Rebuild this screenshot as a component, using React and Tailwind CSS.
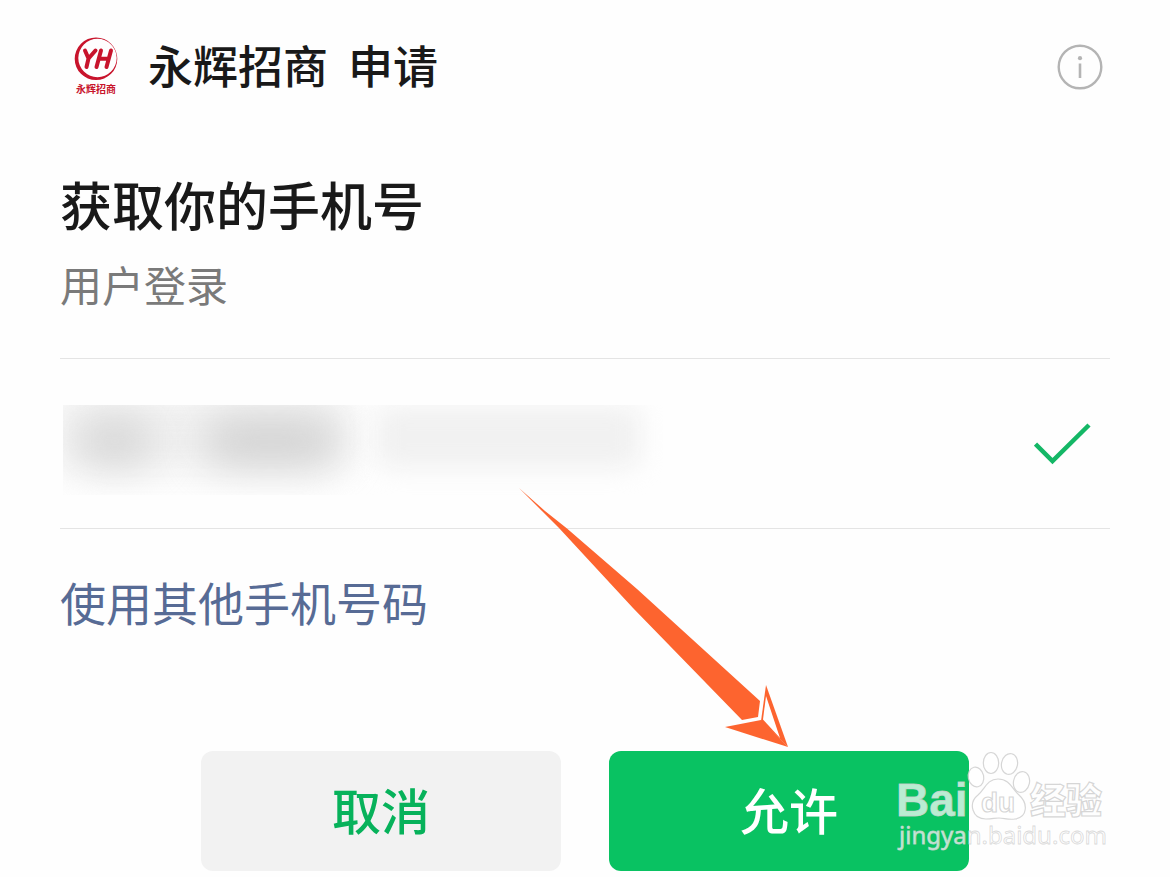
import React from "react";

function Logo() {
  return (
    <div className="flex w-[72px] flex-col items-center">
      <svg viewBox="0 0 44 44" className="h-11 w-11" aria-hidden="true">
        <path
          fillRule="evenodd"
          fill="#c8142c"
          d="M22 0.500a21.300 21.300 0 1 0 0 42.600a21.300 21.300 0 1 0 0-42.600ZM23.500 1.800a19.200 19.200 0 1 1 0 38.400a19.200 19.200 0 1 1 0-38.400Z"
        />
        <g fill="none" stroke="#c8142c" strokeWidth="4" strokeLinecap="round" strokeLinejoin="round">
          <path d="M11 13.500L14.500 21.500L21.500 13.500M14.500 21.500L12.500 30" />
          <path d="M27 13.500L22.500 30M37 13.500L32.500 30M25 21.700H34.500" />
        </g>
      </svg>
      <span className="text-[10px] leading-4 font-bold text-[#c8142c]">永辉招商</span>
    </div>
  );
}

function InfoButton() {
  return (
    <button type="button" aria-label="说明" className="h-12 w-12 text-[#b4b4b4]">
      <svg viewBox="0 0 48 48" className="h-12 w-12" fill="none">
        <circle cx="24" cy="24" r="21.3" stroke="currentColor" strokeWidth="2.4" />
        <circle cx="24" cy="15.2" r="2.1" fill="currentColor" />
        <path d="M24 20.5V35" stroke="currentColor" strokeWidth="2.6" />
      </svg>
    </button>
  );
}

function Arrow() {
  return (
    <svg
      viewBox="0 0 270 260"
      className="pointer-events-none absolute right-[180px] bottom-full mb-1 h-[260px] w-[270px]"
      aria-hidden="true"
    >
      <path fill="#fd642f" d="M0 1L26 24L48 41.500L118 102L241 214L239 230L223 233L114 121L40 41L23 24Z" />
      <path fill="#fd642f" d="M206 240L242 233L269 260Z" />
      <path fill="#fd642f" d="M247 198L269 260L242 234Z" />
      <path fill="#ffffff" d="M247 209L261 251L244 232.500Z" />
    </svg>
  );
}

function Watermark() {
  return (
    <div
      className="pointer-events-none absolute right-14 bottom-6 h-[104px] w-[218px]"
      aria-hidden="true"
    >
      <svg viewBox="0 0 218 104" className="h-[104px] w-[218px]">
        <g fill="#ffffff" fillOpacity="0.72" stroke="#cfcfcf" strokeOpacity="0.85" strokeWidth="1.2">
          <ellipse cx="80" cy="28" rx="7.700" ry="10" transform="rotate(-12 80 28)" />
          <ellipse cx="95" cy="14" rx="7.700" ry="10.500" />
          <ellipse cx="113.500" cy="15" rx="8" ry="10.500" transform="rotate(12 113.500 15)" />
          <ellipse cx="125.500" cy="33" rx="8" ry="10.500" transform="rotate(12 125.500 33)" />
          <path d="M102 30C91 30 89 40 82 46C72 54 76 70 90 70C97 70 98 69 103 69C108 69 112 71 119 70C132 68 132 54 123 46C116 40 114 30 102 30Z" />
          <text x="85" y="63" fontFamily="Liberation Sans, sans-serif" fontWeight="700" fontSize="28">du</text>
          <text x="134" y="65" fontFamily="Noto Sans CJK SC, sans-serif" fontWeight="900" fontSize="36">经验</text>
        </g>
        <g fill="#ffffff" fillOpacity="0.72" stroke="#d0d0d0" strokeOpacity="0.8" strokeWidth="0.8">
          <text x="0" y="67" fontFamily="Liberation Sans, sans-serif" fontWeight="700" fontSize="46">Bai</text>
          <text x="3" y="95" fontFamily="Noto Sans, sans-serif" fontSize="24">jingyan.baidu.com</text>
        </g>
      </svg>
    </div>
  );
}

export default function App() {
  return (
    <main className="relative min-h-screen overflow-hidden bg-[#fefefe] px-15 pb-1.5 font-['Noto_Sans_CJK_SC',sans-serif] text-[#191919]">
      <header className="flex h-[134px] items-center justify-between">
        <div className="flex items-center gap-4">
          <Logo />
          <p className="mb-1 flex gap-5 text-[45px] leading-[64px] font-medium">
            <span>永辉招商</span>
            <span>申请</span>
          </p>
        </div>
        <div className="mt-1 mr-1.5">
          <InfoButton />
        </div>
      </header>

      <section className="pt-9 pb-10">
        <h1 className="text-[52px] leading-[68px] font-medium">获取你的手机号</h1>
        <p className="mt-3 text-[42px] leading-[68px] text-[#7a7a7a]">用户登录</p>
      </section>

      <section className="flex h-[171px] items-center justify-between border-y border-[#e4e4e4]">
        <div className="relative mt-3 ml-[3px] h-[90px] w-[600px] overflow-hidden">
          <div className="absolute -top-3 -left-2 h-[80px] w-[296px] rounded-3xl bg-[#f2f2f2] blur-[16px]" />
          <div className="absolute top-3 left-3 h-12 w-[80px] rounded-full bg-[#d6d6d6] blur-[20px]" />
          <div className="absolute top-3 left-[140px] h-12 w-[136px] rounded-full bg-[#d2d2d2] blur-[20px]" />
          <div className="absolute top-0 left-[312px] h-[64px] w-[266px] rounded-2xl bg-[#f1f1f1] blur-[12px]" />
        </div>
        <svg viewBox="0 0 60 44" className="mr-4 h-11 w-15" fill="none" aria-label="已选择">
          <path d="M1.500 22L18.500 39L55 3" stroke="#14b766" strokeWidth="4.500" />
        </svg>
      </section>

      <div className="pt-[38px]">
        <a href="#other" className="block w-fit text-[46px] leading-[68px] text-[#576b95]">
          使用其他手机号码
        </a>
      </div>

      <div className="mt-[116px] flex justify-center gap-12">
        <button
          type="button"
          className="h-30 w-90 rounded-xl bg-[#f2f2f2] pb-1 text-[49px] leading-[68px] font-medium text-[#07b25b]"
        >
          取消
        </button>
        <div className="relative w-90">
          <button
            type="button"
            className="h-30 w-full rounded-xl bg-[#09c262] pb-1 text-[49px] leading-[68px] font-medium text-white"
          >
            允许
          </button>
          <Arrow />
        </div>
      </div>
      <Watermark />
    </main>
  );
}
